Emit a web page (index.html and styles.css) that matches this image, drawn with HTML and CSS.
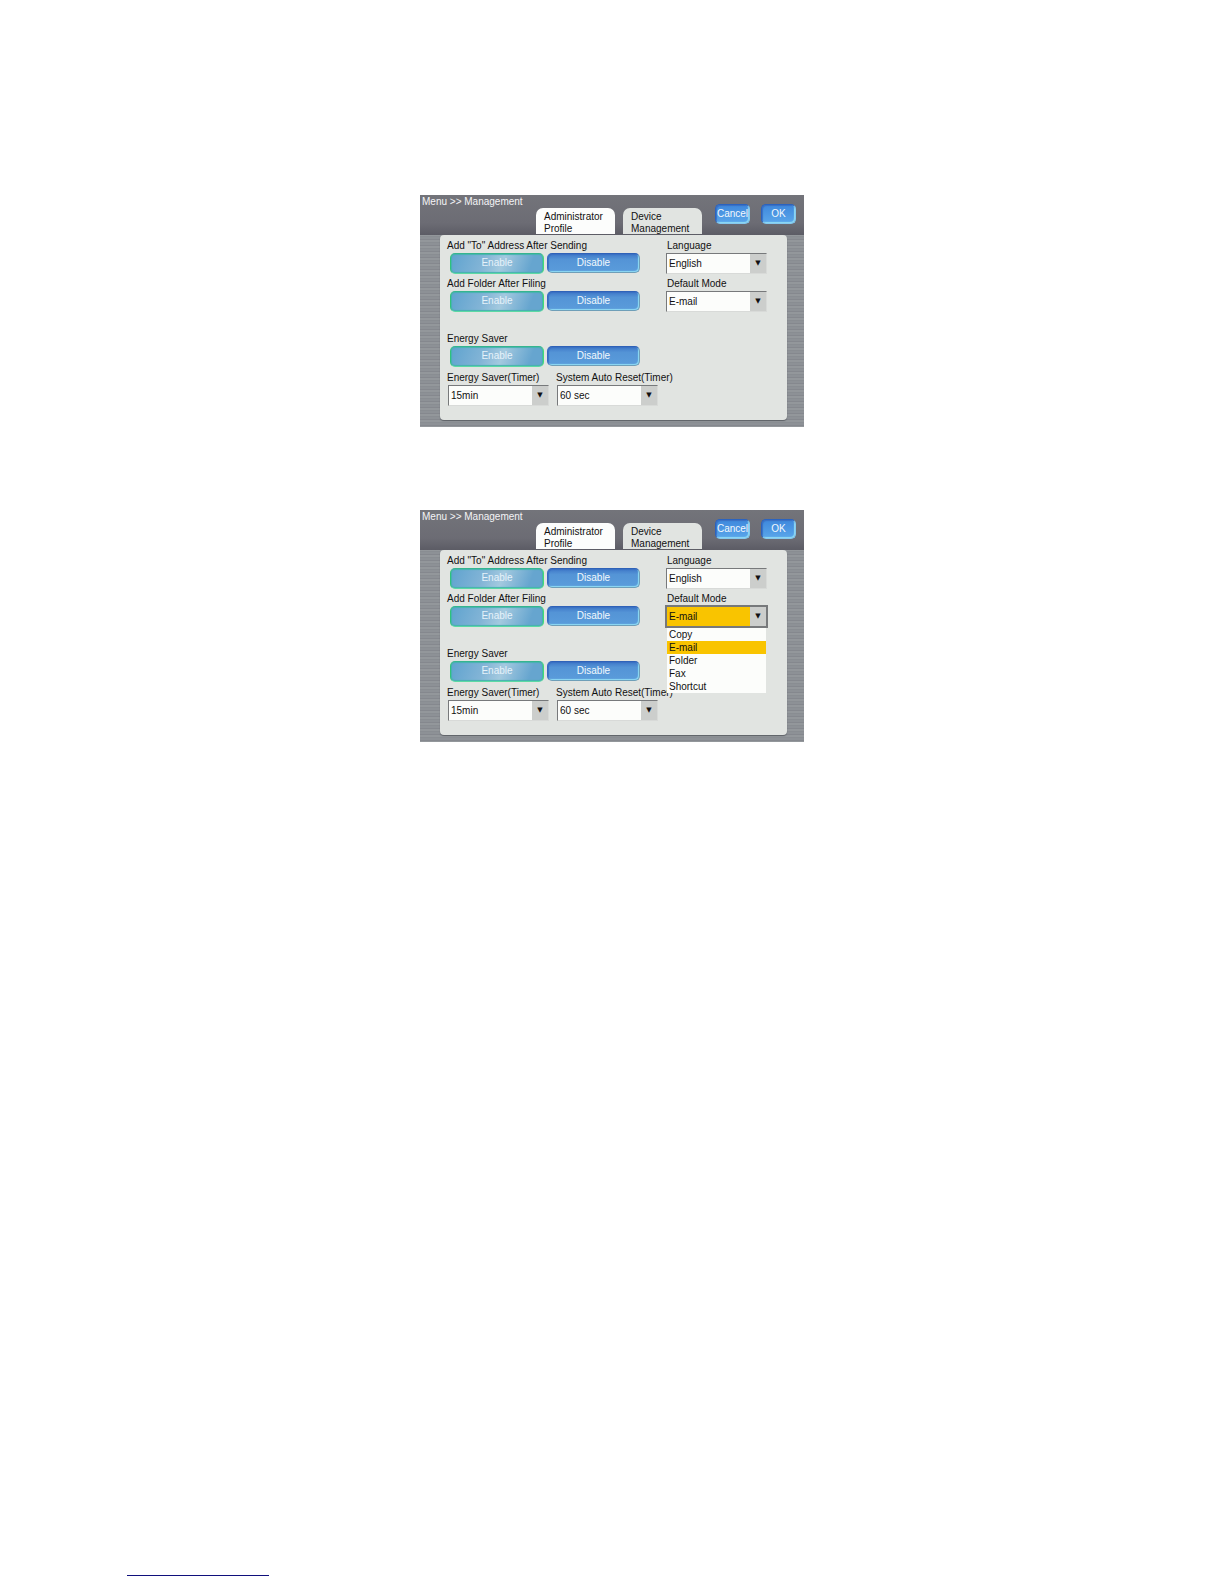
FILE: index.html
```html
<!DOCTYPE html>
<html lang="en">
<head>
<meta charset="utf-8">
<title>Menu &gt;&gt; Management</title>
<meta name="viewport" content="width=device-width, initial-scale=1">
<link rel="stylesheet" href="styles.css">
</head>
<body>
<main class="page">
  <section class="screen" aria-label="Administrator profile">
    <header class="topbar">
      <h2 class="title">Menu &gt;&gt; Management</h2>
      <div class="tabs" role="tablist">
        <button class="tab tab-active" type="button" role="tab" aria-selected="true">Administrator<br>Profile</button>
        <button class="tab" type="button" role="tab" aria-selected="false">Device<br>Management</button>
      </div>
      <div class="actions">
        <button class="key action" type="button">Cancel</button>
        <button class="key action" type="button">OK</button>
      </div>
    </header>
    <form class="panel">
      <div class="field" role="group" aria-labelledby="to-a">
        <span class="label" id="to-a">Add "To" Address After Sending</span>
        <div class="toggle">
          <button class="key key-on" type="button" aria-pressed="true">Enable</button>
          <button class="key" type="button" aria-pressed="false">Disable</button>
        </div>
      </div>
      <div class="field side">
        <label class="label" for="lang-a">Language</label>
        <div class="picker"><select id="lang-a"><option>English</option></select></div>
      </div>
      <div class="field" role="group" aria-labelledby="folder-a">
        <span class="label" id="folder-a">Add Folder After Filing</span>
        <div class="toggle">
          <button class="key key-on" type="button" aria-pressed="true">Enable</button>
          <button class="key" type="button" aria-pressed="false">Disable</button>
        </div>
      </div>
      <div class="field side">
        <label class="label" for="mode-a">Default Mode</label>
        <div class="picker"><select id="mode-a"><option>E-mail</option></select></div>
      </div>
      <div class="field energy" role="group" aria-labelledby="energy-a">
        <span class="label" id="energy-a">Energy Saver</span>
        <div class="toggle">
          <button class="key key-on" type="button" aria-pressed="true">Enable</button>
          <button class="key" type="button" aria-pressed="false">Disable</button>
        </div>
      </div>
      <div class="timers">
        <div class="field">
          <label class="label" for="timer-a">Energy Saver(Timer)</label>
          <div class="picker"><select id="timer-a"><option>15min</option></select></div>
        </div>
        <div class="field">
          <label class="label" for="reset-a">System Auto Reset(Timer)</label>
          <div class="picker"><select id="reset-a"><option>60 sec</option></select></div>
        </div>
      </div>
    </form>
  </section>

  <section class="screen" aria-label="Administrator profile, default mode list open">
    <header class="topbar">
      <h2 class="title">Menu &gt;&gt; Management</h2>
      <div class="tabs" role="tablist">
        <button class="tab tab-active" type="button" role="tab" aria-selected="true">Administrator<br>Profile</button>
        <button class="tab" type="button" role="tab" aria-selected="false">Device<br>Management</button>
      </div>
      <div class="actions">
        <button class="key action" type="button">Cancel</button>
        <button class="key action" type="button">OK</button>
      </div>
    </header>
    <form class="panel">
      <div class="field" role="group" aria-labelledby="to-b">
        <span class="label" id="to-b">Add "To" Address After Sending</span>
        <div class="toggle">
          <button class="key key-on" type="button" aria-pressed="true">Enable</button>
          <button class="key" type="button" aria-pressed="false">Disable</button>
        </div>
      </div>
      <div class="field side">
        <label class="label" for="lang-b">Language</label>
        <div class="picker"><select id="lang-b"><option>English</option></select></div>
      </div>
      <div class="field" role="group" aria-labelledby="folder-b">
        <span class="label" id="folder-b">Add Folder After Filing</span>
        <div class="toggle">
          <button class="key key-on" type="button" aria-pressed="true">Enable</button>
          <button class="key" type="button" aria-pressed="false">Disable</button>
        </div>
      </div>
      <div class="field side">
        <label class="label" for="mode-b">Default Mode</label>
        <div class="picker picker-open">
          <select id="mode-b"><option>E-mail</option></select>
          <ul class="menu" role="listbox" aria-label="Default Mode">
            <li role="option">Copy</li>
            <li class="chosen" role="option" aria-selected="true">E-mail</li>
            <li role="option">Folder</li>
            <li role="option">Fax</li>
            <li role="option">Shortcut</li>
          </ul>
        </div>
      </div>
      <div class="field energy" role="group" aria-labelledby="energy-b">
        <span class="label" id="energy-b">Energy Saver</span>
        <div class="toggle">
          <button class="key key-on" type="button" aria-pressed="true">Enable</button>
          <button class="key" type="button" aria-pressed="false">Disable</button>
        </div>
      </div>
      <div class="timers">
        <div class="field">
          <label class="label" for="timer-b">Energy Saver(Timer)</label>
          <div class="picker"><select id="timer-b"><option>15min</option></select></div>
        </div>
        <div class="field">
          <label class="label" for="reset-b">System Auto Reset(Timer)</label>
          <div class="picker"><select id="reset-b"><option>60 sec</option></select></div>
        </div>
      </div>
    </form>
  </section>
  <hr class="footer-rule">
</main>
</body>
</html>
```
FILE: styles.css
```css
* {
  box-sizing: border-box;
}

body {
  margin: 0;
  background: #fff;
  color: #111;
  font: 10px/12px "Liberation Sans", Arial, sans-serif;
}

button,
select {
  font: inherit;
}

.page {
  display: flex;
  flex-direction: column;
  align-items: center;
  gap: 83px;
  min-height: 100vh;
  padding: 195px 127px 8px;
}

.screen {
  width: 384px;
  max-width: 100%;
  padding-bottom: 7px;
  background: repeating-linear-gradient(#8d9196 0 2px, #85888e 2px 3px, #93979b 3px 5px, #898d92 5px 6px);
}

/* Header with the breadcrumb, tabs and keys */
.topbar {
  display: flex;
  height: 40px;
  background: linear-gradient(#73747a, #6c6c74 70%, #5c5c65);
}

.title {
  flex: 1;
  margin: 0;
  padding: 1px 2px;
  color: #f4f4f6;
  font-size: 10px;
  font-weight: 400;
  white-space: nowrap;
}

.tabs {
  display: flex;
  align-items: flex-end;
  gap: 8px;
  padding-bottom: 1px;
}

.tab {
  width: 79px;
  height: 26px;
  padding: 3px 0 0 8px;
  border: 0;
  border-radius: 7px 7px 0 0;
  background: #e1e4e1;
  color: #111;
  text-align: left;
}

.tab-active {
  background: #fcfdfc;
}

.actions {
  display: flex;
  gap: 11px;
  padding: 9px 8px 0 13px;
}

/* Glossy blue keys */
.key {
  width: 93px;
  height: 20px;
  padding: 0 0 1px;
  border: 1px solid;
  border-color: #2f62b8 #6f9fb8 #6f9fb8 #3767c4;
  border-radius: 5px;
  background: linear-gradient(#3f78c8, #5494d6 30%, #5a9cdb);
  box-shadow: inset -1px -1px 1px #8fdcf4, inset 1px 1px 1px #3a70c4;
  color: #f2f8fd;
  text-align: center;
}

.key-on {
  width: 94px;
  height: 21px;
  border-color: #35b58f #43dc74 #5cd9a4 #2fc27c;
  background: linear-gradient(110deg, #5fa3cf, #82b4d6 35%, #a3c9df 55%, #66a5cf 85%);
  box-shadow: inset 0 0 1px 1px #45b3ae;
  color: #e6f2fa;
}

.action {
  width: 35px;
  padding: 0;
  border-color: #2a63c0 #86c8ee #86c8ee #2a63c0;
  background: linear-gradient(#3f88dc, #5aa6ea);
}

/* Settings */
.panel {
  display: grid;
  grid-template-columns: 1fr 101px;
  row-gap: 4px;
  margin: 0 17px 0 20px;
  padding: 5px 20px 14px 7px;
  border-radius: 4px;
  background: #e1e4e1;
  box-shadow: 0 1px 1px #5e6167;
}

.field {
  display: grid;
  grid-template-columns: 100%;
  grid-template-rows: 12px 21px;
  row-gap: 1px;
}

.label {
  white-space: nowrap;
}

.side .label {
  padding-left: 1px;
}

.toggle {
  display: flex;
  gap: 3px;
  padding-left: 3px;
}

.energy,
.timers {
  grid-column: 1 / -1;
}

.energy {
  margin-top: 17px;
}

.timers {
  display: flex;
  gap: 7px;
  margin-top: 1px;
}

.timers .field {
  width: 102px;
}

.timers .picker {
  margin-left: 1px;
}

.picker {
  position: relative;
  border: 1px solid;
  border-color: #77797b #d8dad8 #d8dad8 #77797b;
}

.picker select {
  display: block;
  width: 100%;
  height: 100%;
  padding: 0 16px 0 2px;
  border: 0;
  border-radius: 0;
  background: #fcfdfb;
  color: #111;
  appearance: none;
}

.picker::after {
  content: "▼";
  position: absolute;
  inset: 0 0 0 auto;
  width: 16px;
  background: #cccecc;
  font: 7px/19px "DejaVu Sans", sans-serif;
  text-align: center;
  pointer-events: none;
}

.picker-open {
  outline: 2px solid #77797b;
  outline-offset: -1px;
}

.picker-open select {
  background: #f9c400;
}

.menu {
  position: absolute;
  z-index: 1;
  top: 100%;
  left: 0;
  width: 100%;
  margin: 2px 0 0;
  padding: 0;
  background: #fcfdfb;
  list-style: none;
}

.menu li {
  padding: 0 2px;
  line-height: 13px;
}

.menu .chosen {
  background: #f9c400;
}

.footer-rule {
  align-self: flex-start;
  width: 142px;
  height: 1px;
  margin: auto 0 0;
  border: 0;
  background: #10107c;
}
```
